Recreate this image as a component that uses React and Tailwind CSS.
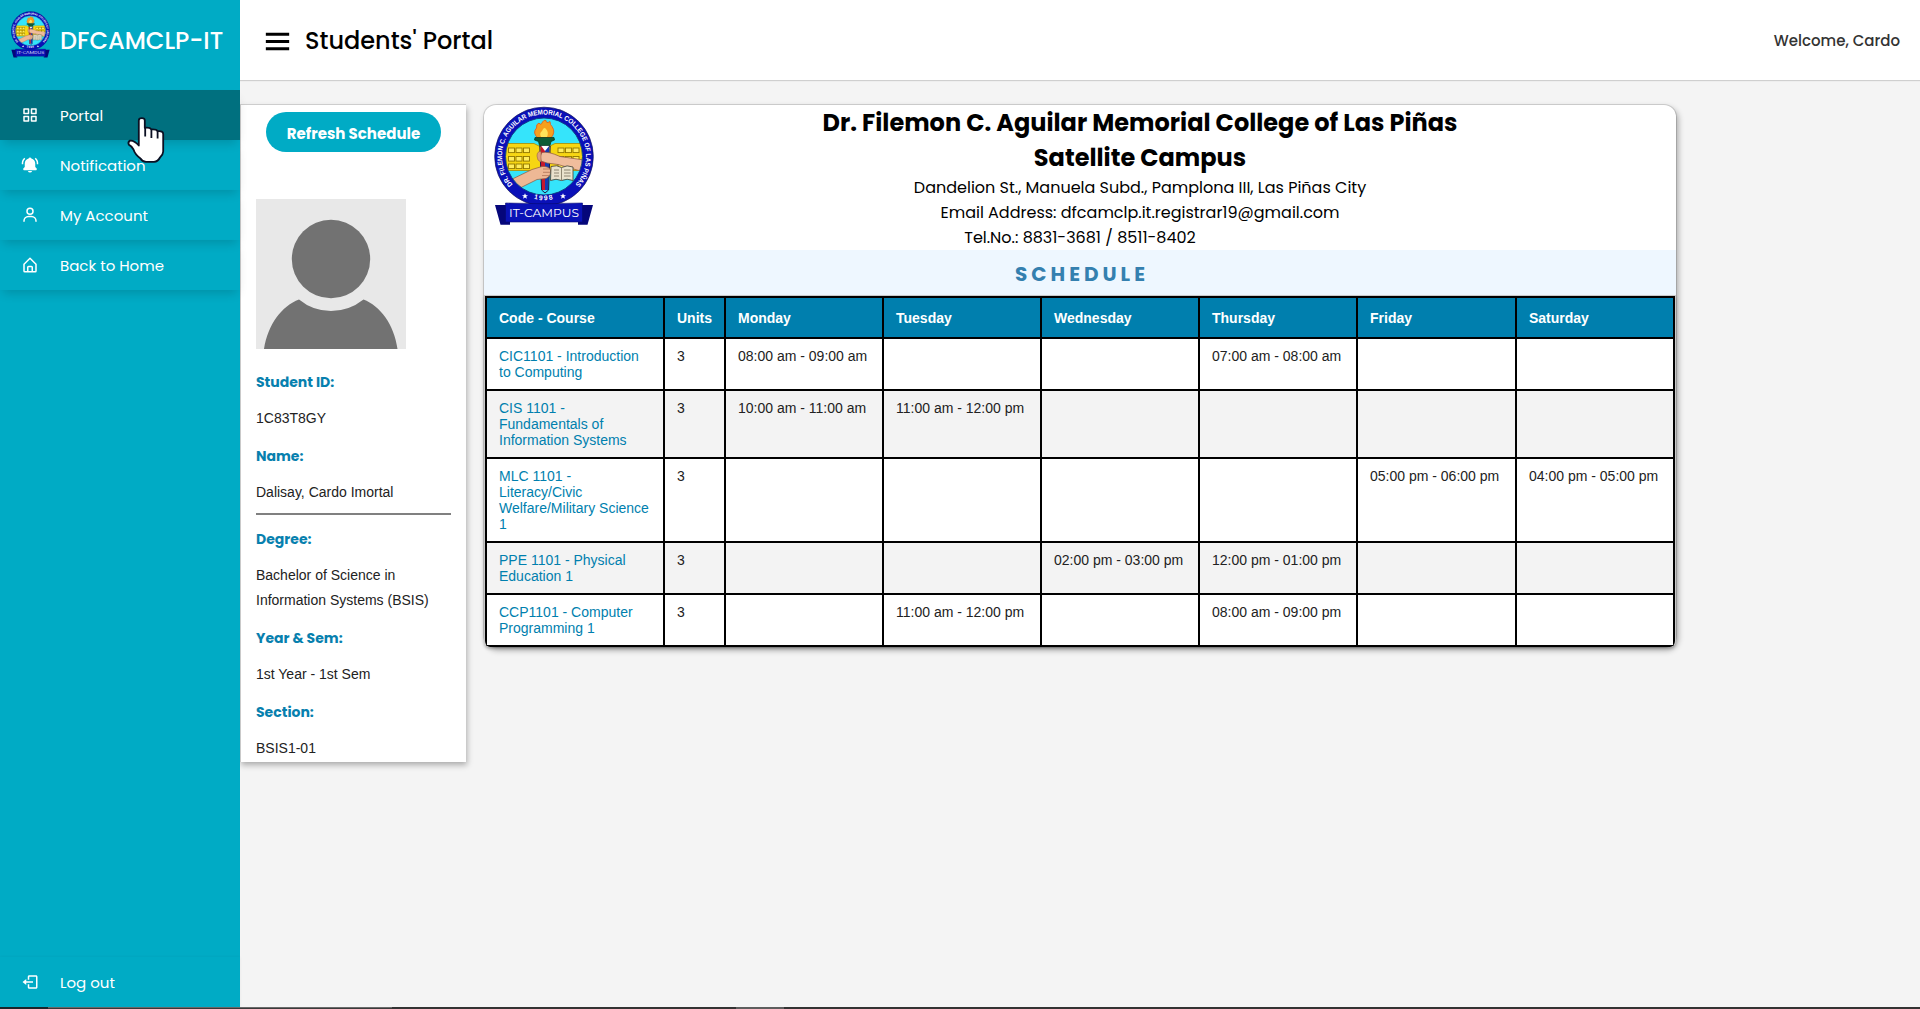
import React, { useId } from "react";
import { BiGridAlt, BiSolidBellRing, BiUser, BiHomeAlt, BiLogOut, BiMenu } from "react-icons/bi";

const DAYS = ["Monday", "Tuesday", "Wednesday", "Thursday", "Friday", "Saturday"];

const COURSES = [
  { name: "CIC1101 - Introduction to Computing", units: 3, times: { Monday: "08:00 am - 09:00 am", Thursday: "07:00 am - 08:00 am" } },
  { name: "CIS 1101 - Fundamentals of Information Systems", units: 3, times: { Monday: "10:00 am - 11:00 am", Tuesday: "11:00 am - 12:00 pm" } },
  { name: "MLC 1101 - Literacy/Civic Welfare/Military Science 1", units: 3, times: { Friday: "05:00 pm - 06:00 pm", Saturday: "04:00 pm - 05:00 pm" } },
  { name: "PPE 1101 - Physical Education 1", units: 3, times: { Wednesday: "02:00 pm - 03:00 pm", Thursday: "12:00 pm - 01:00 pm" } },
  { name: "CCP1101 - Computer Programming 1", units: 3, times: { Tuesday: "11:00 am - 12:00 pm", Thursday: "08:00 am - 09:00 pm" } },
];

const NAV = [
  { label: "Portal", Icon: BiGridAlt, active: true },
  { label: "Notification", Icon: BiSolidBellRing },
  { label: "My Account", Icon: BiUser },
  { label: "Back to Home", Icon: BiHomeAlt },
];

function Seal({ className }) {
  const id = useId();
  const sky = `${id}-sky`;
  const ring = `${id}-ring`;
  const foot = `${id}-foot`;
  return (
    <svg viewBox="0 0 100 120" className={className} aria-label="IT Campus seal">
      <defs>
        <clipPath id={sky}>
          <circle cx="50" cy="50.5" r="38.5" />
        </clipPath>
        <path id={ring} d="M20.3 80.2 A42 42 0 1 1 79.7 80.2" />
        <path id={foot} d="M30 88.5 Q50 100 70 88.5" />
      </defs>
      <circle cx="50" cy="50.5" r="49.3" fill="#0a10b8" stroke="#12125a" strokeWidth="0.7" />
      <circle cx="50" cy="50.5" r="38.5" fill="#35e4fb" />
      <g clipPath={`url(#${sky})`}>
        <path d="M10 37.5 H40 L45 40 H56 L61 37.5 H90 V64.5 H10Z" fill="#f7d613" stroke="#a98a00" strokeWidth="0.8" />
        <g fill="#ffec5c" stroke="#8f7600" strokeWidth="0.9">
          {[42, 50.5, 58].map((y) =>
            [14.5, 22, 29.5, 64, 71.5, 79].map((x) => <rect key={`${x}-${y}`} x={x} y={y} width="6" height="4.6" />)
          )}
        </g>
        <path d="M46.5 40 H51 V84 L47.5 84Z" fill="#c8182c" />
        <path d="M51 40 H55.5 L54.5 84 H51Z" fill="#153cb0" />
        <path d="M45.8 40 L47.6 84 L51 87 L54.6 84 L56.2 40Z" fill="none" stroke="#1b1b4a" strokeWidth="1" />
        <path d="M46.5 39 L51 45 L56 39Z" fill="#fff" />
        <path d="M8 78 L38 63.5 L48 60.5 Q55 60 56.5 64 Q57.5 70 52 72.5 L43 73.5 L12 89Z" fill="#eeb895" stroke="#8b5740" strokeWidth="0.7" />
        <path d="M90 54 L66 50.5 Q54 45 48 46.5 Q45 50 47 55 L53 57 L64 58.5 L90 66Z" fill="#f0bd9c" stroke="#8b5740" strokeWidth="0.7" />
        <path d="M47 45.5 Q43 45 43 50 Q43 55 47 56Z" fill="#dfa07a" stroke="#8b5740" strokeWidth="0.5" />
        <path d="M49 63 H56 M49 66.3 H56.6 M48 69.6 H55" stroke="#a5694c" strokeWidth="0.7" />
        <path d="M57 60.5 Q63 58.5 67.5 61.5 Q73 58.5 79 61 V74.5 Q73 72 67.5 74.5 Q62 72 56.5 74.5Z" fill="#e9e2cc" stroke="#4f4a3c" strokeWidth="0.9" />
        <path d="M67.5 62 V75 M60 64 H65 M60 67 H65 M60 70 H65 M70 64 H76.5 M70 67 H76.5 M70 70 H76.5" stroke="#77705b" strokeWidth="0.8" />
      </g>
      <circle cx="50" cy="50.5" r="38.5" fill="none" stroke="#0b3f7d" strokeWidth="0.9" />
      <path d="M44 32 Q38 27 42.5 22 Q42 18 45 17 Q47 20 48.5 16 Q50 13.5 52 14.5 Q52 18 56 15.5 Q56 19 58 20.5 Q62 26 57 32Z" fill="#f6a01d" stroke="#e0611c" strokeWidth="0.9" />
      <path d="M47 31 Q45 27 48 25 Q50 20 52 23 Q55 26 53 31Z" fill="#ffe35a" />
      <path d="M41 31.5 H60 L60.5 34 L57 35.5 L56 39.5 H45.5 L44.5 35.5 L40.5 34Z" fill="#0e5b35" stroke="#06301c" strokeWidth="0.7" />
      <text fontSize="6.9" fontWeight="700" fill="#fff" fontFamily="Liberation Sans, sans-serif">
        <textPath href={`#${ring}`} startOffset="50%" textAnchor="middle" textLength="193" lengthAdjust="spacingAndGlyphs">
          DR. FILEMON C. AGUILAR MEMORIAL COLLEGE OF LAS PIÑAS
        </textPath>
      </text>
      <text fontSize="6.8" fontWeight="700" fill="#fff" fontFamily="Liberation Sans, sans-serif" letterSpacing="1.4">
        <textPath href={`#${foot}`} startOffset="50%" textAnchor="middle">1998</textPath>
      </text>
      <g fill="#fff">
        <path d="M31 87.2 l.9 2 2.1.1 -1.7 1.3 .6 2.1 -1.9-1.2 -1.9 1.2 .6-2.1 -1.7-1.3 2.1-.1z" />
        <path d="M69 87.2 l.9 2 2.1.1 -1.7 1.3 .6 2.1 -1.9-1.2 -1.9 1.2 .6-2.1 -1.7-1.3 2.1-.1z" />
      </g>
      <path d="M1 99 H13 V115.5 H16 V118.7 H6.5Z" fill="#05067a" />
      <path d="M99 99 H87 V115.5 H84 V118.7 H93.5Z" fill="#05067a" />
      <path d="M11.5 97 Q50 98.5 88.5 97 V116 H11.5Z" fill="#0a12b6" stroke="#060a72" strokeWidth="0.6" />
      <text x="50" y="110.9" textAnchor="middle" fontSize="11.4" fill="#fff" fontFamily="Montserrat, Poppins, sans-serif" textLength="70" lengthAdjust="spacingAndGlyphs">
        IT-CAMPUS
      </text>
    </svg>
  );
}

function NavItem({ label, Icon, active }) {
  return (
    <a
      className={
        active
          ? "flex h-[50px] items-center bg-[#00707f] text-white shadow-[0_6px_10px_-3px_rgba(0,0,0,0.16)]"
          : "flex h-[50px] items-center text-white shadow-[0_6px_10px_-3px_rgba(0,0,0,0.16)]"
      }
    >
      <span className="flex w-[60px] justify-center">
        <Icon className="size-[18px]" />
      </span>
      <span className="pt-0.5 text-[15px]">{label}</span>
    </a>
  );
}

function Field({ label, children }) {
  return (
    <>
      <dt className="mb-[11px] font-['Poppins','Inter',sans-serif] font-bold text-[#0780ae]">{label}</dt>
      <dd className="font-['Liberation_Sans',Arial,sans-serif] text-[#222]">{children}</dd>
    </>
  );
}

function HandCursor() {
  return (
    <svg viewBox="0 0 60 62" className="pointer-events-none absolute top-[108px] left-[120px] z-20 h-[62px] w-[60px]">
      <path
        d="M18.8 12.5 Q18.8 10.2 21.8 10.2 Q24.8 10.2 24.8 12.5 V19.8 Q30 19.2 31.2 21.4 Q36.5 21 37.6 23.2 Q43.2 22.6 43.2 26 V43.5 Q43 47 40 49.5 Q38 53.6 34 53.8 H26 Q22 53.6 20.5 50.5 Q15 46.5 13.5 41.5 Q11.5 38 8.8 36.6 Q7.6 34 10 32.6 Q14 32 18.8 37.5Z"
        fill="#fff"
        stroke="#0b1023"
        strokeWidth="1.8"
        strokeLinejoin="round"
      />
      <path d="M25.2 20 V28.5 M31.4 21.5 V30 M37.6 23 V30.5" stroke="#0b1023" strokeWidth="1.8" />
    </svg>
  );
}

export default function App() {
  return (
    <div className="relative flex h-[1009px] w-[1920px] flex-col overflow-hidden bg-[#f4f4f4] font-['Poppins','Inter',sans-serif]">
      <div className="flex h-[1007px]">
        <aside className="z-10 flex w-60 flex-col bg-[#00abc5]">
          <div className="flex h-20 items-center">
            <div className="flex w-[60px] justify-center">
              <Seal className="mb-3 h-[47px] w-[39px]" />
            </div>
            <span className="pt-0.5 text-2xl font-medium text-white">DFCAMCLP-IT</span>
          </div>
          <nav className="mt-2.5 flex flex-col">
            {NAV.map((item) => (
              <NavItem key={item.label} {...item} />
            ))}
          </nav>
          <a className="mt-auto flex h-[50px] items-center text-white shadow-[0_0_3px_rgba(0,0,0,0.06)]">
            <span className="flex w-[60px] justify-center">
              <BiLogOut className="size-[18px]" />
            </span>
            <span className="pt-0.5 text-[15px]">Log out</span>
          </a>
        </aside>

        <div className="flex flex-1 flex-col">
          <header className="flex h-20 items-center bg-white pr-5 pl-5 shadow-[0_1px_1px_rgba(0,0,0,0.15)]">
            <BiMenu className="mt-0.5 size-[35px] text-black" />
            <h1 className="ml-2.5 pt-0.5 text-2xl font-medium text-black">Students' Portal</h1>
            <span className="ml-auto pt-0.5 text-[15px] font-medium text-[#333]">Welcome, Cardo</span>
          </header>

          <main className="flex items-start pt-[25px]">
            <section className="flex h-[657px] w-[226px] flex-col border-l border-[#c9c9c9] bg-white shadow-[0_-1px_0_#cdcdcd,1px_3px_6px_rgba(0,0,0,0.3)]">
              <button className="mt-[7px] ml-[25px] h-10 w-[175px] rounded-full bg-[#00abc5] pt-[5px] text-[15px] font-bold text-white">
                Refresh Schedule
              </button>
              <div className="mt-[47px] mr-[15px] ml-[15px]">
                <svg viewBox="0 0 150 150" className="size-[150px] bg-[#e8e8e8]">
                  <path d="M8 150 C12 125 26 107 43 100.5 Q57 112 75 112 Q93 112 107.5 100.5 C124 107 138 125 141.5 150Z" fill="#727272" />
                  <circle cx="75" cy="60" r="39.2" fill="#727272" />
                </svg>
                <dl className="mt-[20.5px] text-sm leading-[25px] [&>dd+dt]:mt-[13px]">
                  <Field label="Student ID:">1C83T8GY</Field>
                  <Field label="Name:">Dalisay, Cardo Imortal</Field>
                </dl>
                <hr className="mt-[8.5px] h-0.5 border-0 bg-[#808080]" />
                <dl className="mt-[11.5px] text-sm leading-[25px] [&>dd+dt]:mt-[13px]">
                  <Field label="Degree:">Bachelor of Science in Information Systems (BSIS)</Field>
                  <Field label="Year & Sem:">1st Year - 1st Sem</Field>
                  <Field label="Section:">BSIS1-01</Field>
                </dl>
              </div>
            </section>

            <section className="ml-[18px] w-[1192px] rounded-xl bg-white shadow-[0_0_0_1px_rgba(0,0,0,0.13),2px_3px_6px_rgba(0,0,0,0.33)]">
              <div className="h-[145px] text-center text-base leading-[25px] text-black">
                <Seal className="float-left mt-px mr-2.5 mb-[-3px] ml-2.5 h-[120px] w-[100px]" />
                <h2 className="text-2xl leading-[35px] font-bold">
                  Dr. Filemon C. Aguilar Memorial College of Las Piñas
                  <br />
                  Satellite Campus
                </h2>
                <p>Dandelion St., Manuela Subd., Pamplona III, Las Piñas City</p>
                <p>Email Address: dfcamclp.it.registrar19@gmail.com</p>
                <p>Tel.No.: 8831-3681 / 8511-8402</p>
              </div>
              <h3 className="h-[45px] bg-[#eef7ff] pt-1 pl-1 text-center text-[20px] leading-[41px] font-bold tracking-[4px] text-[#3480af]">
                SCHEDULE
              </h3>
              <div className="overflow-hidden rounded-b-md border-x border-t border-[#c9c9c9] shadow-[0_2px_3px_rgba(0,0,0,0.22)]">
                <table className="w-[1190px] table-fixed border-collapse bg-white text-left align-top font-['Liberation_Sans',Arial,sans-serif] text-sm leading-4">
                  <colgroup>
                    <col className="w-[178px]" />
                    <col className="w-[61px]" />
                    <col className="w-[158px]" />
                    <col className="w-[158px]" />
                    <col className="w-[158px]" />
                    <col className="w-[158px]" />
                    <col className="w-[159px]" />
                    <col className="w-[158px]" />
                  </colgroup>
                  <thead>
                    <tr className="h-[41px] bg-[#007fae] text-white">
                      {["Code - Course", "Units", ...DAYS].map((h) => (
                        <th key={h} className="border-2 border-black pr-2 pl-3 font-bold">{h}</th>
                      ))}
                    </tr>
                  </thead>
                  <tbody>
                    {COURSES.map((c) => (
                      <tr key={c.name} className="align-top text-[#222] even:bg-[#f3f3f3]">
                        <td className="border-2 border-black py-[9px] pr-2.5 pl-3 text-[#007fae]">{c.name}</td>
                        <td className="border-2 border-black py-[9px] pr-2.5 pl-3">{c.units}</td>
                        {DAYS.map((d) => (
                          <td key={d} className="border-2 border-black py-[9px] pr-2.5 pl-3">{c.times[d]}</td>
                        ))}
                      </tr>
                    ))}
                  </tbody>
                </table>
              </div>
            </section>
          </main>
        </div>
      </div>

      <div className="flex h-0.5">
        <div className="w-12 bg-[#1b262b]" />
        <div className="w-[344px] border-t border-[#6a6a6a] bg-[#3a3a3a]" />
        <div className="w-[344px] bg-[#333]" />
        <div className="w-12 bg-[#5e5e5e]" />
        <div className="flex-1 bg-[#333]" />
      </div>
      <HandCursor />
    </div>
  );
}
